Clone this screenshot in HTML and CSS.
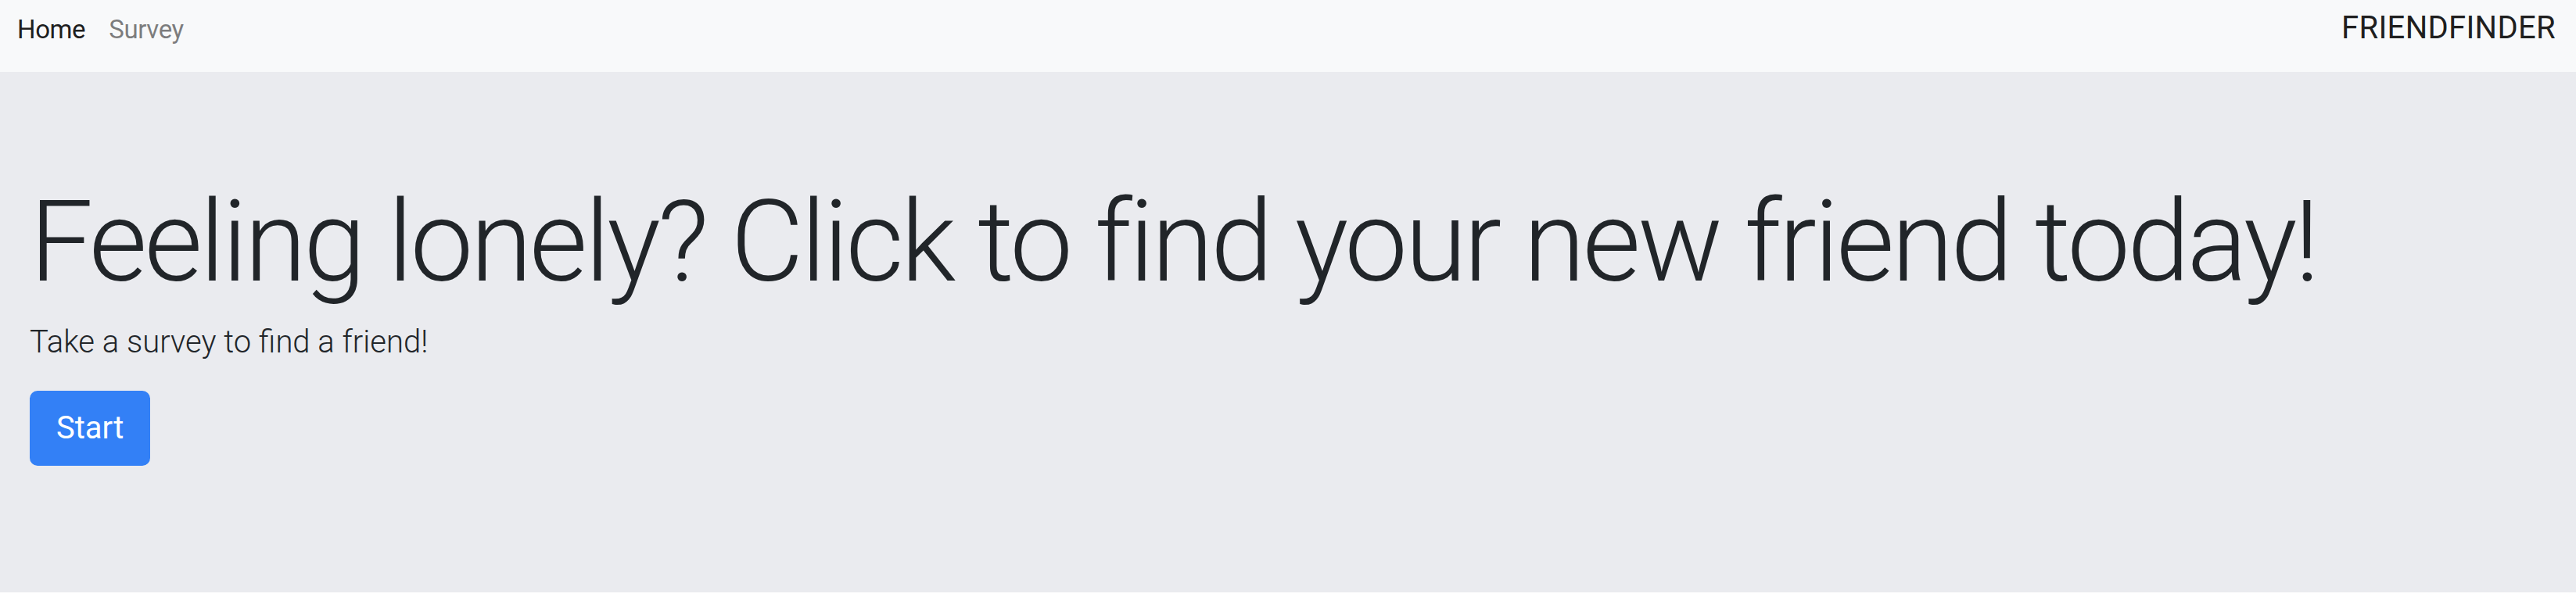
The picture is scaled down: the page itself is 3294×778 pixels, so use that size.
FILE: index.html
```html
<!DOCTYPE html>
<html lang="en">
<head>
<meta charset="utf-8">
<title>FriendFinder</title>
<link rel="stylesheet" href="styles.css">
</head>
<body>
<nav class="navbar">
  <ul class="nav-links">
    <li><a class="nav-link active" href="#">Home</a></li>
    <li><a class="nav-link" href="#">Survey</a></li>
  </ul>
  <a class="brand" href="#">FRIENDFINDER</a>
</nav>
<section class="jumbotron">
  <h1 class="display">Feeling lonely? Click to find your new friend today!</h1>
  <p class="lead">Take a survey to find a friend!</p>
  <a class="btn" href="#">Start</a>
</section>
</body>
</html>
```

FILE: styles.css
```css
* { box-sizing: border-box; }
html, body { margin: 0; padding: 0; }
body {
  font-family: Roboto, "Liberation Sans", sans-serif;
  color: #212529;
  background: #ffffff;
}
.navbar {
  height: 92px;
  background: #f8f9fa;
  display: flex;
  justify-content: space-between;
  align-items: flex-start;
  padding: 0 26px 0 22px;
}
.nav-links {
  list-style: none;
  margin: 0;
  padding: 12px 0 0 0;
  display: flex;
  gap: 30px;
}
.nav-link {
  display: block;
  font-size: 33px;
  line-height: 51px;
  letter-spacing: -0.4px;
  text-decoration: none;
  color: rgba(0, 0, 0, 0.5);
}
.nav-link.active { color: rgba(0, 0, 0, 0.9); }
.brand {
  padding-top: 6px;
  font-size: 40px;
  line-height: 60px;
  letter-spacing: 0.3px;
  text-decoration: none;
  color: rgba(0, 0, 0, 0.9);
}
.jumbotron {
  background: #eaebef;
  height: 666px;
  padding: 132px 38px 0 38px;
}
.display {
  margin: 0 0 11px 0;
  font-size: 144px;
  font-weight: 300;
  line-height: 1.2;
  letter-spacing: -3.7px;
  white-space: nowrap;
}
.lead {
  margin: 0 0 32px 0;
  font-size: 40px;
  font-weight: 300;
  line-height: 1.5;
}
.btn {
  display: inline-block;
  background: #3380f6;
  color: #ffffff;
  font-size: 40px;
  line-height: 60px;
  padding: 18px 34px;
  border-radius: 10px;
  text-decoration: none;
}
```
